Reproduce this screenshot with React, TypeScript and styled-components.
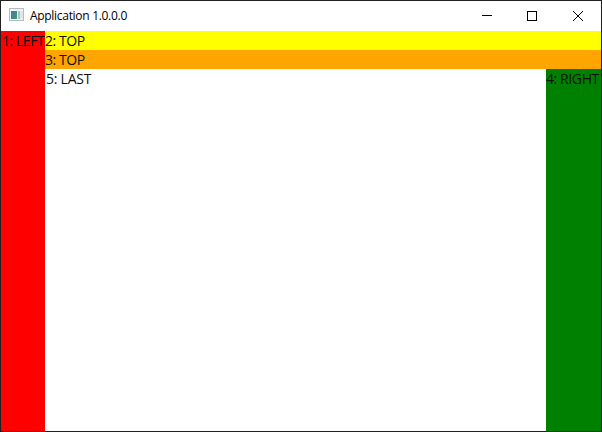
import React from "react";
import styled, { createGlobalStyle } from "styled-components";

const GlobalStyle = createGlobalStyle`
  * { box-sizing: border-box; }
  html, body { margin: 0; padding: 0; overflow: hidden; background: #fff; }
`;

const Window = styled.div`
  width: 602px;
  height: 432px;
  border: 1px solid #202020;
  background: #fff;
  display: flex;
  flex-direction: column;
  color: #000;
  font-family: "Open Sans", "Noto Sans", sans-serif;
`;

const TitleBar = styled.header`
  height: 30px;
  display: flex;
  align-items: center;
  padding-left: 8px;
`;

const Title = styled.span`
  margin-left: 5px;
  flex: 1;
  font-size: 12px;
  letter-spacing: -0.3px;
  line-height: 30px;
  white-space: nowrap;
`;

const Caption = styled.button`
  width: 46px;
  height: 30px;
  padding: 0;
  border: 0;
  background: transparent;
  display: flex;
  align-items: center;
  justify-content: center;
`;

const Row = styled.div`
  flex: 1;
  display: flex;
  min-height: 0;
`;

const Column = styled.div`
  flex: 1;
  display: flex;
  flex-direction: column;
  min-width: 0;
`;

const Side = styled.div<{ $color: string; $width: number; $inset: number }>`
  width: ${(p) => p.$width}px;
  background: ${(p) => p.$color};
  padding-left: ${(p) => p.$inset}px;
`;

const Band = styled.div<{ $color: string }>`
  height: 19px;
  background: ${(p) => p.$color};
`;

const Fill = styled.div`
  flex: 1;
  padding-left: 1px;
`;

const Label = styled.span<{ $spacing: number }>`
  display: block;
  font-size: 14px;
  font-weight: 400;
  color: #101010;
  letter-spacing: ${(p) => p.$spacing}px;
  line-height: 20px;
  white-space: nowrap;
`;

export default function App() {
  return (
    <Window>
      <GlobalStyle />
      <TitleBar>
        <svg width="16" height="16" viewBox="0 0 16 16" shapeRendering="crispEdges">
          <defs>
            <linearGradient id="pane" x1="0" y1="0" x2="1" y2="1">
              <stop offset="0" stopColor="#3f7fa5" />
              <stop offset="1" stopColor="#3f9a70" />
            </linearGradient>
          </defs>
          <rect x="0.5" y="0.5" width="14" height="12" fill="#f4f4f4" stroke="#b8babc" />
          <rect x="2" y="3" width="6" height="8" fill="url(#pane)" />
          <rect x="9" y="3" width="2" height="8" fill="#a5c5c5" />
          <rect x="11" y="3" width="3" height="8" fill="#e2e6e8" />
        </svg>
        <Title>Application 1.0.0.0</Title>
        <Caption aria-label="Minimize"><svg width="12" height="10"><path d="M2 4.5H12" stroke="#000" /></svg></Caption>
        <Caption aria-label="Maximize"><svg width="10" height="10"><rect x=".5" y=".5" width="9" height="9" fill="none" stroke="#000" /></svg></Caption>
        <Caption aria-label="Close"><svg width="10" height="10"><path d="M0 0L10 10M10 0L0 10" stroke="#000" /></svg></Caption>
      </TitleBar>
      <Row>
        <Side $color="#ff0000" $width={44} $inset={1}><Label $spacing={-0.45}>1: LEFT</Label></Side>
        <Column>
          <Band $color="#ffff00"><Label $spacing={-0.45}>2: TOP</Label></Band>
          <Band $color="#ffa500"><Label $spacing={-0.45}>3: TOP</Label></Band>
          <Row>
            <Fill><Label $spacing={-0.25}>5: LAST</Label></Fill>
            <Side $color="#008000" $width={55} $inset={0}><Label $spacing={-0.4}>4: RIGHT</Label></Side>
          </Row>
        </Column>
      </Row>
    </Window>
  );
}
